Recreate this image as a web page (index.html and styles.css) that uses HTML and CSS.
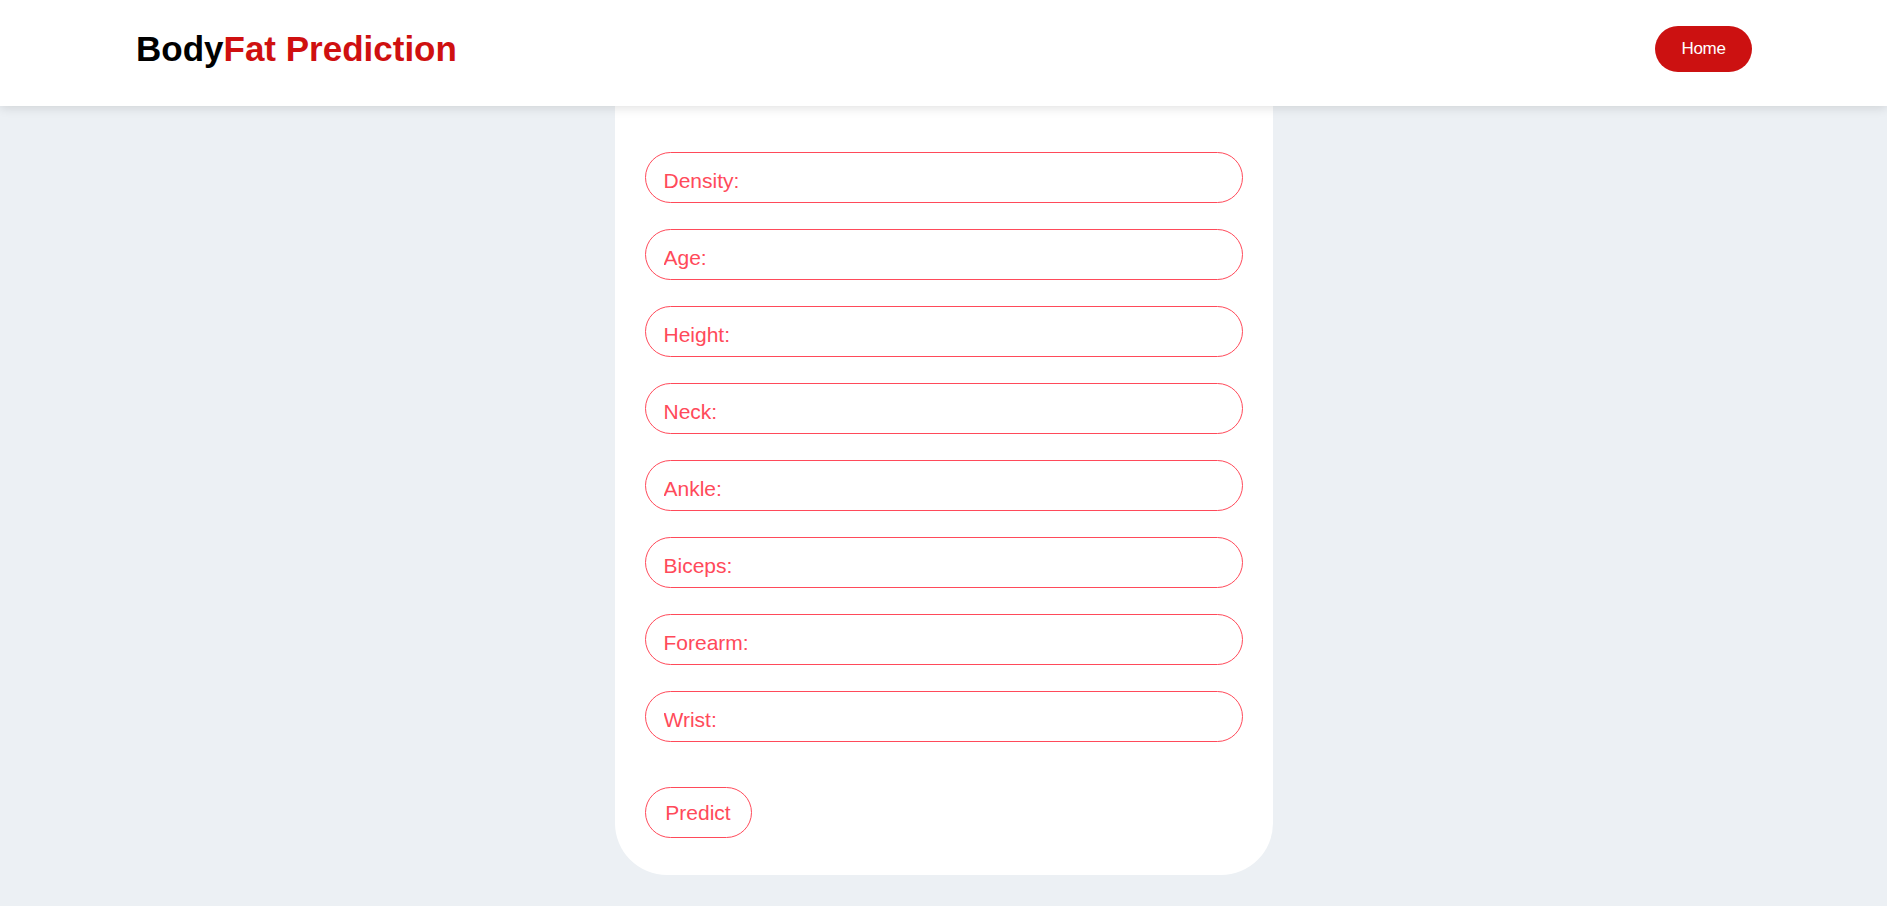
FILE: index.html
```html
<!DOCTYPE html>
<html lang="en">
<head>
<meta charset="utf-8">
<title>BodyFat Prediction</title>
<link rel="stylesheet" href="styles.css">
</head>
<body>
<header class="header">
  <h1 class="brand"><span class="brand-dark">Body</span><span class="brand-red">Fat Prediction</span></h1>
  <a class="home-btn" href="#">Home</a>
</header>
<main class="main">
  <form class="card">
    <input class="field" type="text" placeholder="Density:">
    <input class="field" type="text" placeholder="Age:">
    <input class="field" type="text" placeholder="Height:">
    <input class="field" type="text" placeholder="Neck:">
    <input class="field" type="text" placeholder="Ankle:">
    <input class="field" type="text" placeholder="Biceps:">
    <input class="field" type="text" placeholder="Forearm:">
    <input class="field" type="text" placeholder="Wrist:">
    <button class="predict" type="button">Predict</button>
  </form>
</main>
</body>
</html>
```
FILE: styles.css
```css
* { box-sizing: border-box; }
html, body { margin: 0; padding: 0; }
body {
  background: #ecf0f4;
  font-family: "Liberation Sans", Arial, sans-serif;
}
.header {
  position: relative;
  z-index: 2;
  height: 106px;
  background: #ffffff;
  box-shadow: 0 2px 10px rgba(0,0,0,0.12);
  display: flex;
  align-items: center;
  justify-content: space-between;
  padding: 0 135px 8px 136px;
}
.brand {
  margin: 0;
  font-size: 35px;
  font-weight: bold;
}
.brand-dark { color: #000000; }
.brand-red { color: #cf1010; }
.home-btn {
  display: inline-flex;
  align-items: center;
  justify-content: center;
  width: 97px;
  height: 46px;
  border-radius: 23px;
  background: #cc1111;
  color: #ffffff;
  text-decoration: none;
  font-size: 17px;
  letter-spacing: -0.3px;
}
.main {
  display: flex;
  justify-content: center;
  padding-bottom: 30px;
}
.card {
  width: 658px;
  background: #ffffff;
  border-radius: 0 0 52px 52px;
  padding: 46px 30px 37px;
  display: flex;
  flex-direction: column;
  align-items: flex-start;
  gap: 26px;
}
.field {
  width: 100%;
  height: 51px;
  border: 1px solid #ff4a5a;
  border-radius: 26px;
  padding: 7px 18px 0;
  font-family: "Liberation Sans", Arial, sans-serif;
  font-size: 21px;
  color: #ff4a5a;
  background: #ffffff;
  outline: none;
}
.field::placeholder { color: #ff4a5a; opacity: 1; }
.predict {
  margin-top: 19px;
  width: 107px;
  height: 51px;
  border: 1px solid #ff4a5a;
  border-radius: 26px;
  background: #ffffff;
  color: #ff4a5a;
  font-family: "Liberation Sans", Arial, sans-serif;
  font-size: 21px;
  padding: 0;
}
```
